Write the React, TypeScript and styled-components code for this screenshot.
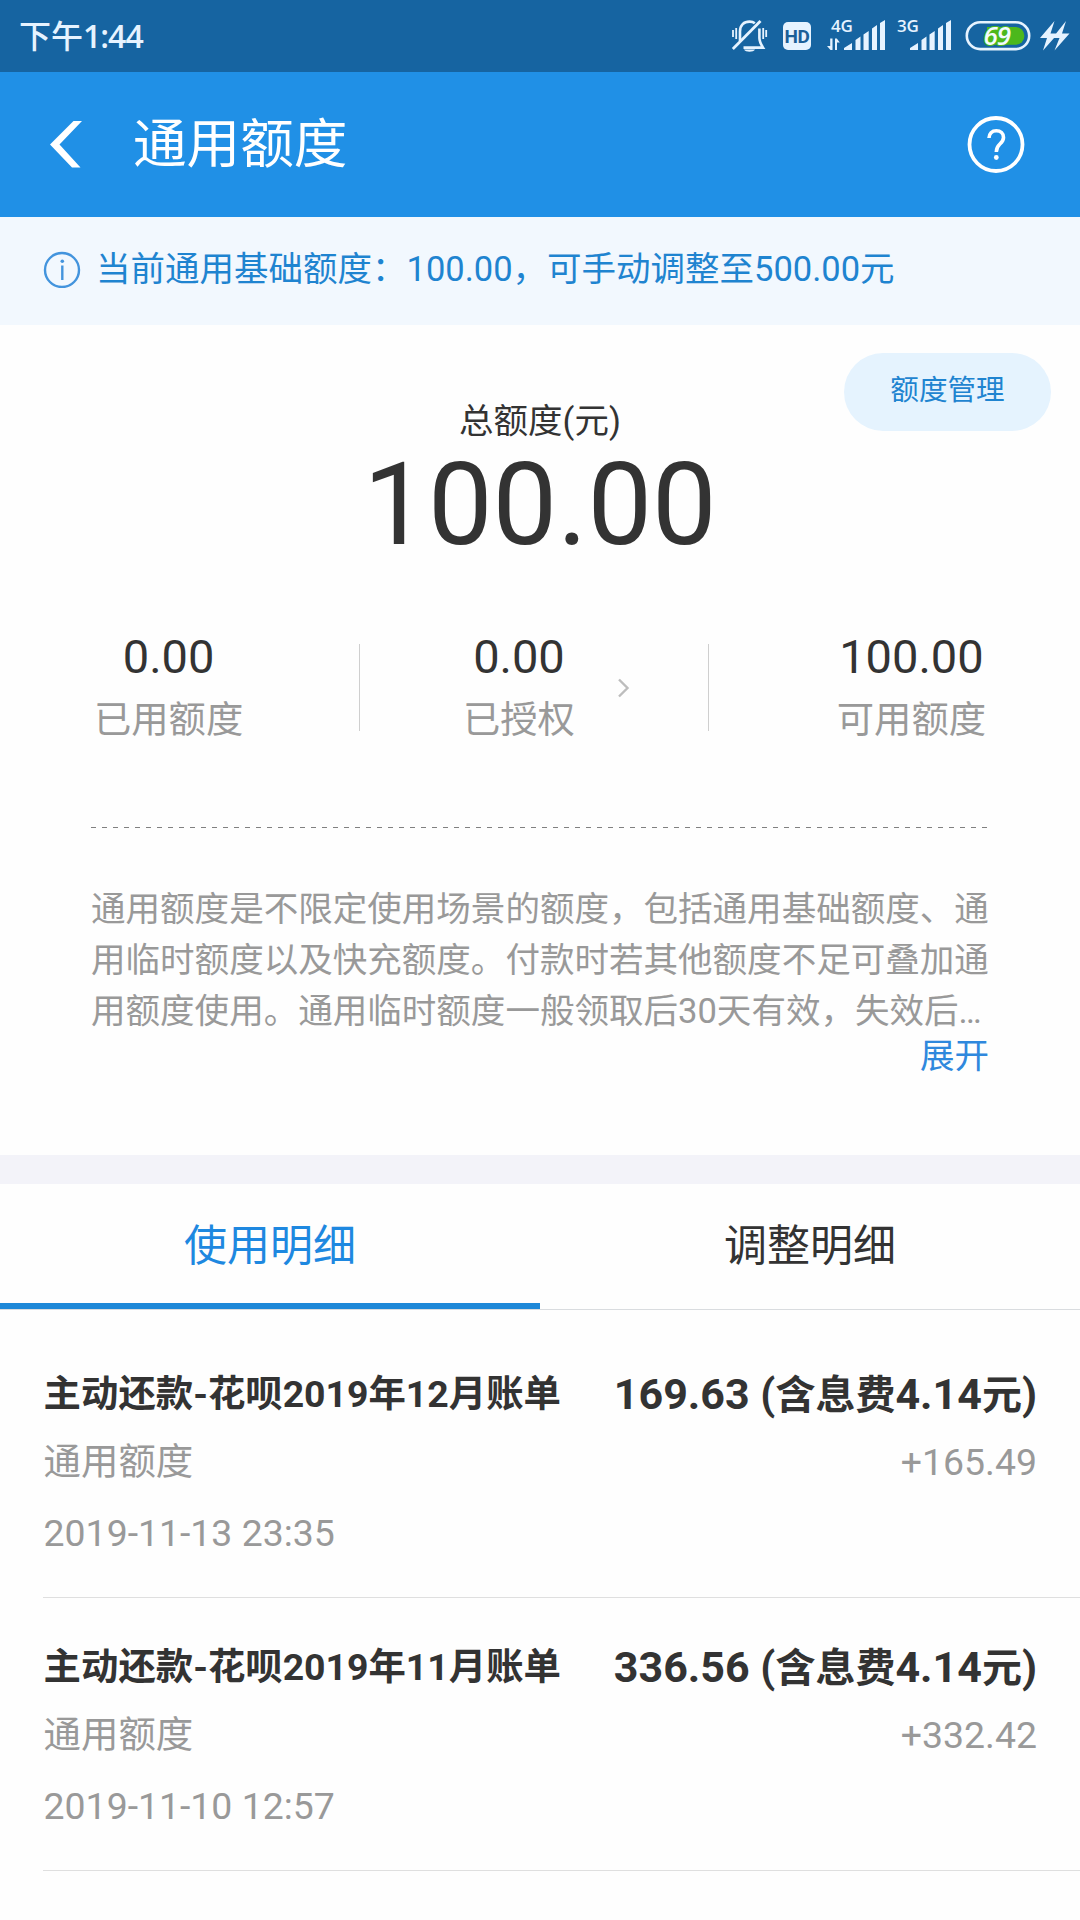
import React from "react";
import styled, { createGlobalStyle } from "styled-components";

const GlobalStyle = createGlobalStyle`
  * { box-sizing: border-box; }
  body {
    margin: 0;
    background: #ffffff;
    color: #333333;
    font-family: Roboto, "Noto Sans CJK SC", sans-serif;
  }
`;

const Screen = styled.div`
  width: 1080px;
  height: 1920px;
  overflow: hidden;
  background: #fefefe;
  display: flex;
  flex-direction: column;
`;

const StatusBar = styled.div`
  height: 72px;
  flex: none;
  display: flex;
  align-items: center;
  justify-content: space-between;
  padding: 0 10px 0 19px;
  background: #1664a1;
  color: #e6f3ff;
`;

const Clock = styled.span`
  font: 600 32px/40px "Open Sans", "Noto Sans CJK SC", sans-serif;
  letter-spacing: -1px;
  white-space: nowrap;
`;

const Meridiem = styled.span`
  font-weight: 500;
  letter-spacing: 0;
`;

const StatusIcons = styled.div`
  display: flex;
  align-items: center;
  height: 72px;
`;

const HdBadge = styled.span`
  width: 28px;
  height: 28px;
  margin: 0 16px 0 15px;
  border-radius: 5px;
  background: #e6f3ff;
  color: #1c5f97;
  font: 700 19px/29px Roboto, sans-serif;
  letter-spacing: -0.4px;
  display: flex;
  justify-content: center;
`;

const StatusGlyph = styled.svg<{ $gap?: number }>`
  display: block;
  flex: none;
  overflow: visible;
  margin-right: ${(p) => p.$gap ?? 0}px;
`;

const SignalLabel = styled.text`
  font: 600 17px "Open Sans", sans-serif;
  letter-spacing: -0.3px;
  fill: #e6f3ff;
`;

const BatteryLevel = styled.text`
  font: italic 600 26px "Open Sans", sans-serif;
  letter-spacing: -1px;
  fill: #f3fbff;
  stroke: #4cb81c;
  stroke-width: 2px;
  paint-order: stroke;
`;

const Header = styled.header`
  height: 145px;
  flex: none;
  display: flex;
  align-items: center;
  padding: 0 55px 0 48px;
  background: #2090e6;
  color: #ffffff;
`;

const Title = styled.h1`
  flex: 1;
  margin: 0 0 0 45px;
  font-size: 53.6px;
  font-weight: 400;
  line-height: 141px;
`;

const Notice = styled.div`
  height: 108px;
  flex: none;
  display: flex;
  align-items: center;
  gap: 15px;
  padding: 0 43px 4px;
  background: #f2f8fe;
  color: #1f84d0;
  font-size: 34.5px;
  line-height: 50px;
  white-space: nowrap;
`;

const Summary = styled.section`
  height: 830px;
  flex: none;
  padding: 0 91px;
  background: #fefefe;
`;

const Hero = styled.div`
  display: grid;
  grid-template-columns: 1fr auto 1fr;
  grid-template-rows: 121px 118px;
  margin: 0 -62px 63px;
`;

const HeroLabel = styled.div`
  grid-column: 2;
  margin-top: 71px;
  font-size: 34.5px;
  line-height: 50px;
  text-align: center;
`;

const ManageButton = styled.button`
  grid-column: 3;
  justify-self: end;
  width: 207px;
  height: 78px;
  margin: 28px 0 0;
  padding: 0 0 9px;
  border: 0;
  border-radius: 39px;
  background: #e5f3fe;
  color: #1f84d0;
  font-family: inherit;
  font-size: 28.6px;
`;

const HeroAmount = styled.div`
  grid-column: 1 / -1;
  font-size: 115px;
  line-height: 118px;
  text-align: center;
`;

const Stats = styled.div`
  display: grid;
  grid-template-columns: 268px 1px 348px 1px 279px;
  height: 125px;
`;

const StatCell = styled.div<{ $align: "start" | "end"; $inset: number }>`
  display: flex;
  align-items: center;
  gap: 42px;
  justify-content: flex-${(p) => p.$align};
  padding-${(p) => (p.$align === "start" ? "left" : "right")}: ${(p) => p.$inset}px;
`;

const Stat = styled.div`
  display: flex;
  flex-direction: column;
  align-items: center;
`;

const StatValue = styled.span`
  font-size: 47px;
  line-height: 60px;
`;

const StatLabel = styled.span`
  color: #999999;
  font-size: 37.3px;
  line-height: 67px;
  height: 65px;
`;

const StatDivider = styled.span`
  height: 87px;
  margin-top: 17px;
  background: #cfcfcf;
`;

const DashedRule = styled.div`
  height: 1px;
  margin: 75px 0 56px;
  background: repeating-linear-gradient(90deg, #808080 0 5px, transparent 5px 11px);
`;

const Description = styled.p`
  margin: 0;
  color: #999999;
  font-size: 34.54px;
  line-height: 51px;
  white-space: nowrap;
`;

const DescriptionLine = styled.span`
  display: block;
`;

const Expand = styled.a`
  display: block;
  color: #2f88dd;
  font-size: 34.5px;
  line-height: 39px;
  text-align: right;
`;

const Band = styled.div`
  height: 29px;
  flex: none;
  background: #f3f3f9;
`;

const Tabs = styled.nav`
  height: 126px;
  flex: none;
  display: flex;
  border-bottom: 1px solid #d9dcdf;
`;

const Tab = styled.div<{ $active?: boolean }>`
  flex: 1;
  padding-top: 4px;
  border-bottom: 6px solid ${(p) => (p.$active ? "#1e88d8" : "transparent")};
  color: ${(p) => (p.$active ? "#1e88e0" : "#333333")};
  font-size: 43px;
  line-height: 117px;
  text-align: center;
`;

const List = styled.div`
  padding: 15px 0 0 43px;
`;

const Item = styled.article`
  height: 273px;
  padding: 45px 43px 0 0.6px;
  border-bottom: 1px solid #dfdfdf;
`;

const ItemRow = styled.div<{ $gap?: number }>`
  display: flex;
  justify-content: space-between;
  height: 50px;
  margin-bottom: ${(p) => p.$gap ?? 0}px;
  color: #999999;
  font-size: 37.4px;
  line-height: 50px;
  white-space: nowrap;
`;

const ItemTitle = styled.strong`
  color: #333333;
  font-size: 37.4px;
  font-weight: 700;
  line-height: 48px;
`;

const ItemAmount = styled.strong`
  color: #333333;
  font-size: 43px;
  font-weight: 700;
  line-height: 49px;
  white-space: pre;
`;

const Hanzi = styled.span`
  font-size: 40px;
  line-height: 1;
`;

const MutedBell = () => (
  <StatusGlyph width="36" height="36" viewBox="0 0 36 36" fill="none" stroke="#e6f3ff" strokeWidth="2.6">
    <path d="M8 23V13.500C8 7 12 3.600 17.500 3.600c2 0 4 .5 5.300 1.600M27.400 10.500V20c0 3.500 1 5.500 3.600 9.600H11.500" />
    <path d="M.800 31 28.500 3" strokeWidth="2.800" />
    <path d="M1 12v7M4.200 10v11M31.200 10v11M34.200 12v7" strokeWidth="1.800" />
    <path d="M12 31.500h11c-1.500 3-9.500 3-11 0z" fill="#e6f3ff" stroke="none" />
  </StatusGlyph>
);

const Signal = ({ label, arrows, gap }: { label: string; arrows?: boolean; gap: number }) => {
  const dx = arrows ? 17 : 13;
  return (
    <StatusGlyph $gap={gap} width={arrows ? 58 : 53} height="32" viewBox={`0 0 ${arrows ? 58 : 53} 32`} fill="#e6f3ff">
      <SignalLabel x={arrows ? 4 : 0} y="11.500">{label}</SignalLabel>
      {arrows && <path d="M5.500 18.500v11.500h-2L0 26h3.200v-7.500zM8 30V18.500h1.800l3 4H10V30z" />}
      <g transform={`translate(${dx} 0)`}>
        <path d="M0 30v-2l8-5v7zM11.500 30V20l5-3.500V30zM19.500 30V14.500l5.200-3.500v19zM28 30V8.500l5-3.500v25zM36 30V3l5-3v30z" />
      </g>
    </StatusGlyph>
  );
};

const Battery = () => (
  <StatusGlyph $gap={10} width="65" height="30" viewBox="0 0 65 30">
    <rect x="1.800" y="1.300" width="62.400" height="26.800" rx="13.400" fill="none" stroke="#e6f3ff" strokeWidth="2.600" />
    <path d="M22 6h28.500a8.800 8.800 0 0 1 0 17.800H22z" fill="#4cb81c" />
    <BatteryLevel x="18.500" y="24">69</BatteryLevel>
  </StatusGlyph>
);

const Charging = () => (
  <StatusGlyph width="30" height="30" viewBox="0 0 30 30" fill="#e6f3ff">
    <path d="M14.500 0 0 17h7L3 29.500 18 12.500H10.500zM26 0 12.500 17h7L14.500 29.500 29.500 12.500H22z" />
  </StatusGlyph>
);

const BackIcon = () => (
  <svg width="40" height="48" viewBox="0 0 40 48" fill="#ffffff">
    <path d="M25.500 0H34L11.500 23.500 32.500 46.500H24L2 23.500z" />
  </svg>
);

const HelpIcon = () => (
  <svg width="58" height="58" viewBox="0 0 58 58" fill="none" stroke="#ffffff">
    <circle cx="29" cy="28.500" r="26.500" strokeWidth="3.800" />
    <path d="M22 22c0-4.500 3-7.300 7.300-7.300s7.200 2.800 7.200 6.700c0 3-1.600 4.700-3.600 6.600-2.300 2.200-3.600 3.600-3.600 8" strokeWidth="3.600" />
    <circle cx="29.300" cy="41.500" r="2.400" fill="#ffffff" stroke="none" />
  </svg>
);

const InfoIcon = () => (
  <svg width="38" height="38" viewBox="0 0 38 38" fill="none" stroke="#4394dd" strokeWidth="2.400">
    <circle cx="19" cy="20" r="17" />
    <path d="M19.300 15.500V30" />
    <circle cx="19.300" cy="11.300" r="1.800" fill="#4394dd" stroke="none" />
  </svg>
);

const records = [
  { title: "主动还款-花呗2019年12月账单", amount: "169.63", fee: "4.14", change: "+165.49", time: "2019-11-13 23:35" },
  { title: "主动还款-花呗2019年11月账单", amount: "336.56", fee: "4.14", change: "+332.42", time: "2019-11-10 12:57" },
];

export default function App() {
  return (
    <Screen>
      <GlobalStyle />
      <StatusBar>
        <Clock>
          <Meridiem>下午</Meridiem>1:44
        </Clock>
        <StatusIcons>
          <MutedBell />
          <HdBadge>HD</HdBadge>
          <Signal label="4G" arrows gap={12} />
          <Signal label="3G" gap={15} />
          <Battery />
          <Charging />
        </StatusIcons>
      </StatusBar>
      <Header>
        <BackIcon />
        <Title>通用额度</Title>
        <HelpIcon />
      </Header>
      <Notice>
        <InfoIcon />
        <span>当前通用基础额度：100.00，可手动调整至500.00元</span>
      </Notice>
      <Summary>
        <Hero>
          <HeroLabel>总额度(元)</HeroLabel>
          <ManageButton>额度管理</ManageButton>
          <HeroAmount>100.00</HeroAmount>
        </Hero>
        <Stats>
          <StatCell $align="start" $inset={3}>
            <Stat>
              <StatValue>0.00</StatValue>
              <StatLabel>已用额度</StatLabel>
            </Stat>
          </StatCell>
          <StatDivider />
          <StatCell $align="start" $inset={103}>
            <Stat>
              <StatValue>0.00</StatValue>
              <StatLabel>已授权</StatLabel>
            </Stat>
            <svg width="14" height="24" viewBox="0 0 14 24" fill="none" stroke="#bdbdbd" strokeWidth="2.400">
              <path d="M2 1.500l8.500 8.500L2 18.500" />
            </svg>
          </StatCell>
          <StatDivider />
          <StatCell $align="end" $inset={2}>
            <Stat>
              <StatValue>100.00</StatValue>
              <StatLabel>可用额度</StatLabel>
            </Stat>
          </StatCell>
        </Stats>
        <DashedRule />
        <Description>
          <DescriptionLine>通用额度是不限定使用场景的额度，包括通用基础额度、通</DescriptionLine>
          <DescriptionLine>用临时额度以及快充额度。付款时若其他额度不足可叠加通</DescriptionLine>
          <DescriptionLine>用额度使用。通用临时额度一般领取后30天有效，失效后…</DescriptionLine>
        </Description>
        <Expand>展开</Expand>
      </Summary>
      <Band />
      <Tabs>
        <Tab $active>使用明细</Tab>
        <Tab>调整明细</Tab>
      </Tabs>
      <List>
        {records.map((r) => (
          <Item key={r.time}>
            <ItemRow $gap={17}>
              <ItemTitle>{r.title}</ItemTitle>
              <ItemAmount>
                {r.amount} (<Hanzi>含息费</Hanzi>{r.fee}<Hanzi>元</Hanzi>)
              </ItemAmount>
            </ItemRow>
            <ItemRow $gap={21}>
              <span>通用额度</span>
              <span>{r.change}</span>
            </ItemRow>
            <ItemRow>
              <time>{r.time}</time>
            </ItemRow>
          </Item>
        ))}
      </List>
    </Screen>
  );
}
